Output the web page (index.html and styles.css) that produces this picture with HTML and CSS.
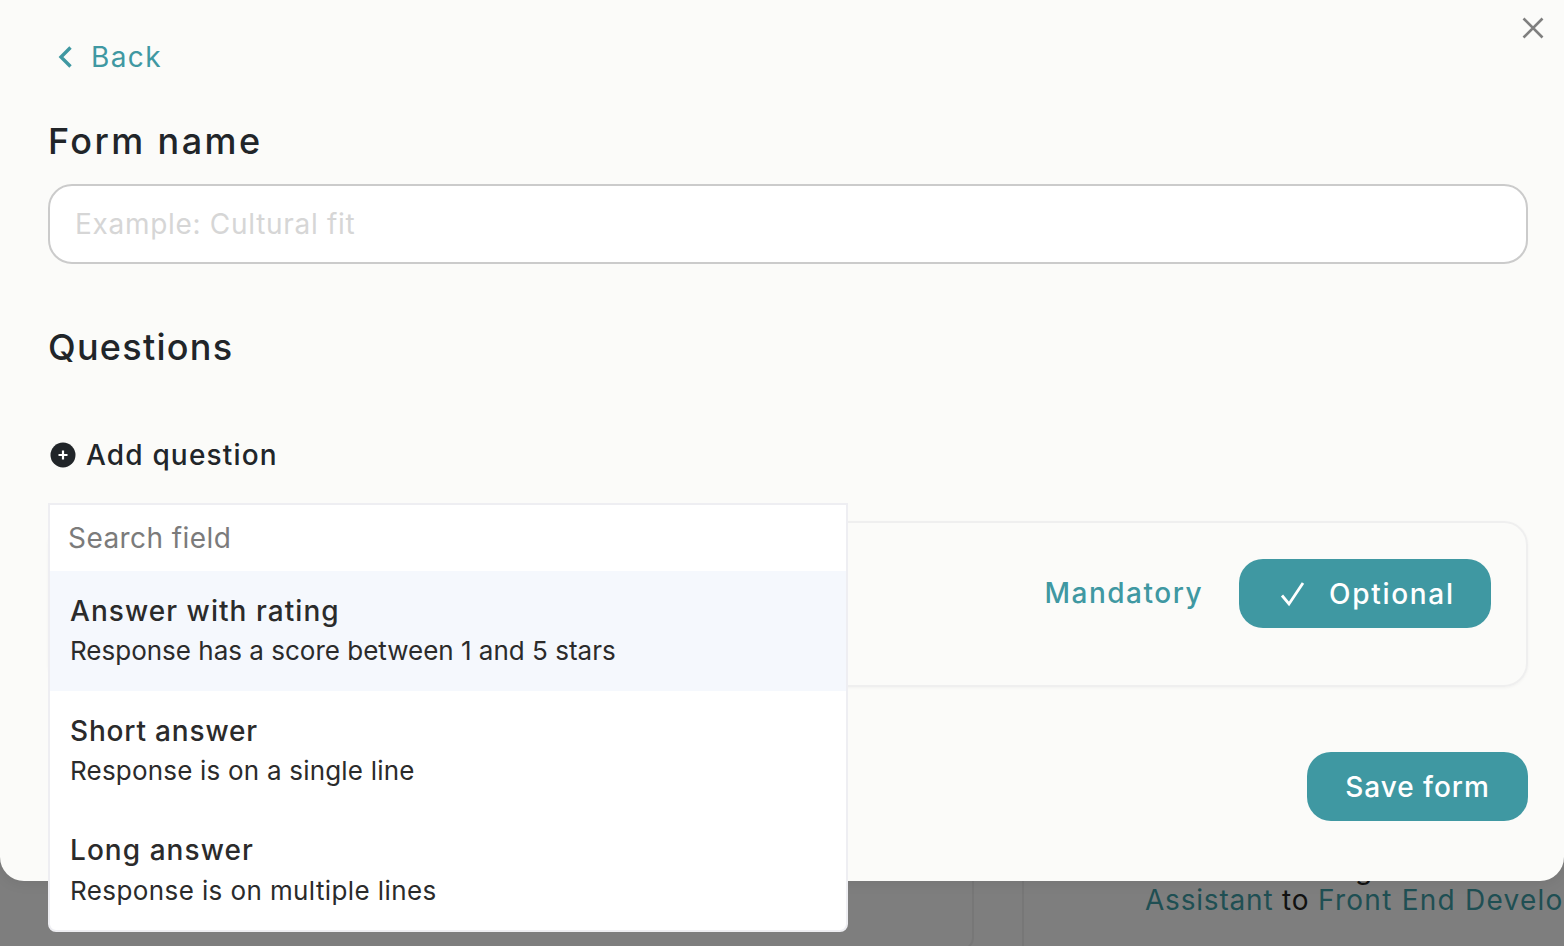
FILE: index.html
```html
<!DOCTYPE html>
<html lang="en">
<head>
<meta charset="utf-8">
<title>Form</title>
<link rel="stylesheet" href="styles.css">
</head>
<body>
<div class="backdrop">
  <div class="back-card"></div>
  <div class="back-col">
    <p class="back-clip">g</p>
    <p class="back-text"><span class="back-link">Assistant</span> to <span class="back-link back-wide">Front End Develo</span></p>
  </div>
</div>
<main class="modal">
  <button class="close" aria-label="Close">
    <svg width="22" height="22" viewBox="0 0 22 22"><path d="M1.5 1.5 20.5 20.5M20.5 1.5 1.5 20.5" stroke="#7f7f7f" stroke-width="2.6" fill="none"/></svg>
  </button>
  <a class="back">
    <svg width="16" height="24" viewBox="0 0 16 24"><path d="M13.5 2.5 4 12l9.5 9.5" stroke="#3f98a2" stroke-width="3.4" fill="none"/></svg>
    <span>Back</span>
  </a>
  <h2 class="title form-title">Form name</h2>
  <div class="name-input">Example: Cultural fit</div>
  <h2 class="title questions-title">Questions</h2>
  <div class="add">
    <svg width="26" height="26" viewBox="0 0 26 26"><circle cx="13" cy="13" r="12.5" fill="#212529"/><path d="M13 8.5v9M8.5 13h9" stroke="#fff" stroke-width="2.2"/></svg>
    <span>Add question</span>
  </div>
  <section class="q-card">
    <span class="mandatory">Mandatory</span>
    <button class="btn optional">
      <svg width="28" height="26" viewBox="0 0 28 26"><path d="M3 14.5 10 23 24 2" stroke="#fff" stroke-width="2.8" fill="none"/></svg>
      <span>Optional</span>
    </button>
  </section>
  <div class="actions"><button class="btn save">Save form</button></div>
  <div class="dropdown">
    <div class="search">Search field</div>
    <div class="item active"><div class="item-title t-rating">Answer with rating</div><div class="item-sub s-rating">Response has a score between 1 and 5 stars</div></div>
    <div class="item"><div class="item-title t-short">Short answer</div><div class="item-sub s-short">Response is on a single line</div></div>
    <div class="item item-last"><div class="item-title t-long">Long answer</div><div class="item-sub s-long">Response is on multiple lines</div></div>
  </div>
</main>
</body>
</html>
```
FILE: styles.css
```css
* { box-sizing: border-box; }
html, body { margin: 0; height: 100%; }
body {
  width: 1564px; height: 946px; overflow: hidden; position: relative;
  background: #7e7e7e;
  font-family: Inter, "Noto Sans", "Liberation Sans", sans-serif;
  color: #212529;
}
.backdrop { position: absolute; inset: 0; display: flex; overflow: hidden; }
.back-card { width: 974px; height: 950px; border-right: 2px solid #777; border-bottom: 2px solid #777; border-bottom-right-radius: 12px; flex: none; }
.back-col { margin-left: 48px; width: 542px; flex: none; border-left: 2px solid #777; padding-left: 121px; padding-top: 846px; white-space: nowrap; position: relative; }
.back-clip { position: absolute; left: 331px; top: 851px; margin: 0; font-size: 28px; line-height: 36px; color: #111; }
.back-text { margin: 0; font-size: 28px; line-height: 36px; padding-top: 36px; color: #111; letter-spacing: 0.8px; }
.back-link { color: #1f4f53; }
.back-wide { letter-spacing: 1.25px; }
.modal {
  position: relative; width: 1564px; height: 881px;
  background: #fbfbf9;
  border-radius: 0 0 24px 24px;
  padding: 38px 36px 0 48px;
  box-shadow: 0 2px 14px rgba(0,0,0,.08);
}
.close { position: absolute; top: 17px; right: 20px; padding: 0; border: 0; background: none; width: 22px; height: 22px; }
.close svg { display: block; }
.back { display: flex; align-items: center; gap: 18px; height: 38px; padding-left: 9px; color: #3f98a2; font-size: 28px; letter-spacing: 1.4px; }
.title { margin: 0; font-weight: 500; font-size: 36px; line-height: 44px; color: #212529; }
.form-title { margin-top: 43px; letter-spacing: 2.4px; }
.questions-title { margin-top: 61px; letter-spacing: 1.27px; }
.name-input {
  margin-top: 21px; height: 80px; border: 2px solid #cbcbcb; border-radius: 24px; background: #fff;
  padding-left: 25px; display: flex; align-items: center; font-size: 28px; letter-spacing: 0.7px; color: #d6d6d6;
}
.add { margin-top: 68px; height: 36px; display: flex; align-items: center; gap: 10px; padding-left: 2px; font-size: 28px; font-weight: 450; letter-spacing: 1.17px; }
.add svg { flex: none; }
.q-card {
  margin-top: 48px; height: 166px; border: 2px solid #efefef; border-radius: 24px;
  display: flex; align-items: flex-start; justify-content: flex-end; padding: 36px 35px 0 0; gap: 36px;
  box-shadow: 0 1px 3px rgba(0,0,0,.04);
}
.mandatory { line-height: 69px; font-size: 28px; font-weight: 500; letter-spacing: 1.5px; color: #3f98a2; }
.btn { border: 0; border-radius: 24px; background: #3f98a2; color: #fff; font: inherit; font-size: 28px; font-weight: 500; height: 69px; display: flex; align-items: center; justify-content: center; padding: 0; }
.optional { width: 252px; gap: 22px; justify-content: flex-start; padding-left: 40px; letter-spacing: 1.7px; }
.save { width: 221px; letter-spacing: 0.98px; }
.actions { margin-top: 65px; display: flex; justify-content: flex-end; }
.dropdown {
  position: absolute; left: 48px; top: 503px; width: 800px; height: 429px;
  background: #fff; border: 2px solid #eeeef2; border-radius: 0 0 8px 8px;
}
.search { height: 66px; padding-left: 18px; display: flex; align-items: center; font-size: 28px; letter-spacing: 0.43px; color: #7b7b7b; }
.item { height: 120px; padding: 20px 20px 0; color: #2b2b2b; }
.item.active { background: #f5f8fd; }
.item-last { padding-top: 19px; }
.item-title { font-size: 28px; font-weight: 450; line-height: 40px; }
.item-sub { font-size: 26px; line-height: 40px; }
.item-last .item-sub { margin-top: 1px; }
.t-rating { letter-spacing: 1.05px; }
.t-short { letter-spacing: 0.83px; }
.t-long { letter-spacing: 1.05px; }
.s-rating { letter-spacing: 0; }
.s-short { letter-spacing: 0.2px; }
.s-long { letter-spacing: 0.4px; }
```
